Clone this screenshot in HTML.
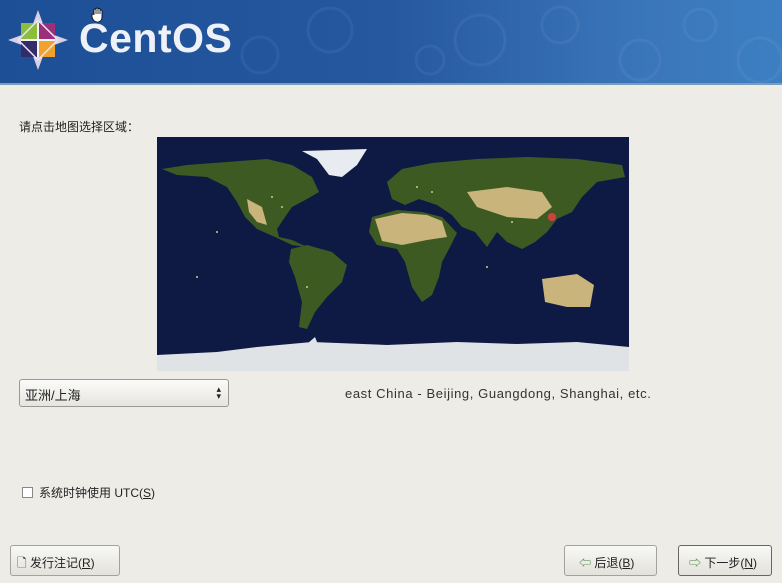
<!DOCTYPE html>
<html><head><meta charset="utf-8"><style>
*{margin:0;padding:0;box-sizing:border-box}
body{width:782px;height:583px;background:#edece7;font-family:"Liberation Sans","Noto Sans CJK SC",sans-serif;font-size:12px;color:#222;position:relative;overflow:hidden}
.hdr{position:absolute;left:0;top:0;width:782px;height:85px;background:linear-gradient(90deg,#1d4f96 0%,#25589f 50%,#3a74b8 80%,#3d7fc2 100%);border-bottom:2px solid #7d9cbc}
.logo{position:absolute;left:79px;top:15px;font-size:41px;font-weight:bold;color:#eef2f8;letter-spacing:0.5px}
.lbl{position:absolute;left:19px;top:118px;font-size:12px}
.map{position:absolute;left:157px;top:137px}
.sel{position:absolute;left:19px;top:379px;width:210px;height:28px;border:1px solid #9a9a95;border-radius:3px;background:linear-gradient(#fbfbf9,#e6e5e0);padding:5px 5px;font-size:13px}
.sel .ar{position:absolute;right:7px;top:6px;font-size:9px;line-height:7px}
.desc{position:absolute;left:345px;top:386px;font-size:13px;color:#333;letter-spacing:0.6px}
.cb{position:absolute;left:22px;top:484px;font-size:12px}
.cb span.box{display:inline-block;width:11px;height:11px;border:1px solid #888;background:#fff;vertical-align:-1px;margin-right:6px}
.btn{position:absolute;height:31px;border:1px solid #a3a29c;border-radius:3px;background:linear-gradient(#f8f8f5,#e3e2dc);font-size:12px;padding:8px 6px;white-space:nowrap}
</style></head><body>
<div class="hdr">
<svg width="782" height="85" style="position:absolute;left:0;top:0" opacity="0.07">
<g fill="none" stroke="#bcd4f2" stroke-width="3">
<circle cx="260" cy="55" r="18"/><circle cx="330" cy="30" r="22"/><circle cx="430" cy="60" r="14"/><circle cx="480" cy="40" r="25"/><circle cx="560" cy="25" r="18"/><circle cx="640" cy="60" r="20"/><circle cx="700" cy="25" r="16"/><circle cx="760" cy="60" r="22"/></g></svg>
<svg width="70" height="70" style="position:absolute;left:4px;top:6px" viewBox="0 0 70 70">
<g transform="translate(34,34)">
<polygon points="0,-30 8,-8 30,0 8,8 0,30 -8,8 -30,0 -8,-8" fill="#d8cfe6"/>
<rect x="-17" y="-17" width="16" height="16" fill="#8bbe3a"/>
<rect x="1" y="-17" width="16" height="16" fill="#9c2f7c"/>
<rect x="1" y="1" width="16" height="16" fill="#efa32b"/>
<rect x="-17" y="1" width="16" height="16" fill="#342b6b"/>
<g transform="rotate(45)" fill="none" stroke="#e8e4f0" stroke-width="1.5"><rect x="-14" y="-14" width="28" height="28"/></g>
<path d="M-17,0H17M0,-17V17" stroke="#fff" stroke-width="1.5"/>
</g></svg>
<div class="logo">CentOS</div>
<svg width="14" height="16" style="position:absolute;left:91px;top:7px" viewBox="0 0 14 16"><path d="M3,8V3a1,1 0 0 1 2,0V7V2a1,1 0 0 1 2,0V7V2.5a1,1 0 0 1 2,0V7V4a1,1 0 0 1 2,0V10c0,3-2,5-4,5H6C4,15 2,13 1,10L1,8a1,1 0 0 1 2,0z" fill="#fff" stroke="#000" stroke-width="0.8"/></svg>
</div>
<div class="lbl">请点击地图选择区域：</div>
<svg class="map" width="472" height="234" viewBox="0 0 472 234">
<rect width="472" height="234" fill="#0f1a44"/>
<g fill="#3e5a23">
<polygon points="5,32 30,28 70,25 110,22 135,28 155,40 162,55 150,62 135,70 128,80 120,92 122,100 135,103 150,110 135,108 118,100 100,92 88,80 80,65 70,50 50,40 20,38"/>
<polygon points="230,45 245,32 275,26 320,22 370,20 420,22 465,28 468,40 440,45 425,60 415,75 400,82 390,95 378,105 365,112 350,105 340,95 330,110 318,95 305,90 295,78 280,68 262,62 248,68 235,62"/>
<polygon points="134,112 150,108 175,115 190,128 185,145 170,160 158,175 150,192 142,190 145,165 138,140 132,125"/>
<polygon points="215,80 240,73 265,75 285,80 300,96 293,110 285,125 282,140 275,158 265,165 255,150 248,125 240,112 220,108 212,95"/>
</g>
<g fill="#c9b47c">
<polygon points="218,82 245,76 270,78 285,84 290,100 270,103 245,108 225,104"/>
<polygon points="310,55 350,50 385,55 395,70 380,82 350,80 320,70"/>
<polygon points="90,62 105,70 110,88 100,85 92,75"/>
<polygon points="385,142 420,137 437,148 433,170 410,170 388,165"/>
</g>
<polygon points="145,14 210,12 200,28 185,40 172,38 160,22" fill="#e8ecf0"/>
<polygon points="0,218 60,215 100,210 155,205 230,208 300,205 360,207 420,205 472,210 472,234 0,234" fill="#dfe3e6"/>
<polygon points="150,207 158,200 162,210" fill="#dfe3e6"/>
<circle cx="395" cy="80" r="4" fill="#d04040"/>
<g fill="#c9d080"><circle cx="125" cy="70" r="1"/><circle cx="115" cy="60" r="1"/><circle cx="260" cy="50" r="1"/><circle cx="275" cy="55" r="1"/><circle cx="355" cy="85" r="1"/><circle cx="150" cy="150" r="1"/><circle cx="40" cy="140" r="1"/><circle cx="60" cy="95" r="1"/><circle cx="330" cy="130" r="1"/></g>
</svg>
<div class="sel">亚洲/上海<span class="ar">▴<br>▾</span></div>
<div class="desc">east China - Beijing, Guangdong, Shanghai, etc.</div>
<div class="cb"><span class="box"></span>系统时钟使用 UTC(<u>S</u>)</div>
<div class="btn" style="left:10px;top:545px;width:110px">🗋 发行注记(<u>R</u>)</div>
<div class="btn" style="left:564px;top:545px;width:93px;padding-left:14px"><span style="color:#4a7a3a">⇦</span> 后退(<u>B</u>)</div>
<div class="btn" style="left:678px;top:545px;width:94px;padding-left:10px;border-color:#666"><span style="color:#4a7a3a">⇨</span> 下一步(<u>N</u>)</div>
</body></html>
